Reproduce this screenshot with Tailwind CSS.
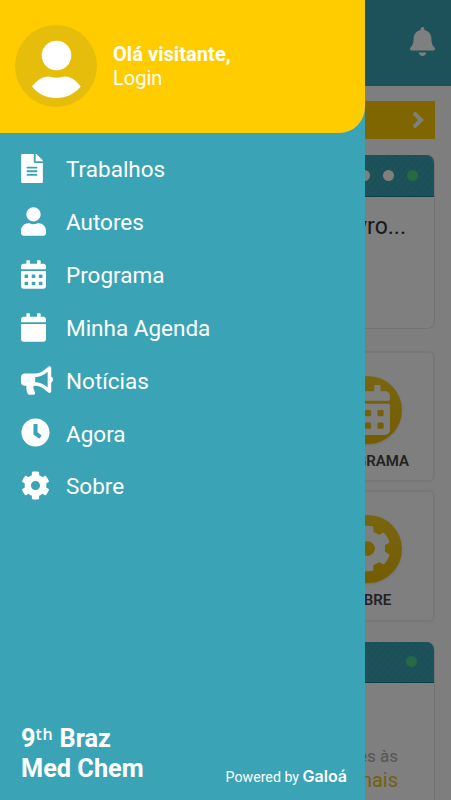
<!DOCTYPE html>
<html lang="pt-BR">

<head>
  <meta charset="UTF-8">
  <meta name="viewport" content="width=device-width, initial-scale=1.0">
  <script src="https://cdn.jsdelivr.net/npm/@tailwindcss/browser@4"></script>
  <title>9th Braz Med Chem</title>
</head>

<body class="flex h-screen flex-col overflow-hidden bg-[#fdfdfd] font-[Roboto,sans-serif]">
  <!-- Ícones compartilhados -->
  <svg class="hidden" aria-hidden="true">
    <symbol id="icon-calendar-alt" viewBox="0 0 448 512">
      <path fill-rule="evenodd" d="M12 192h424c6.6 0 12 5.4 12 12v260c0 26.5-21.5 48-48 48H48c-26.5 0-48-21.5-48-48V204c0-6.6 5.4-12 12-12zM76 256a12 12 0 0 0-12 12v40a12 12 0 0 0 12 12h40a12 12 0 0 0 12-12v-40a12 12 0 0 0-12-12zm128 0a12 12 0 0 0-12 12v40a12 12 0 0 0 12 12h40a12 12 0 0 0 12-12v-40a12 12 0 0 0-12-12zm128 0a12 12 0 0 0-12 12v40a12 12 0 0 0 12 12h40a12 12 0 0 0 12-12v-40a12 12 0 0 0-12-12zM76 384a12 12 0 0 0-12 12v40a12 12 0 0 0 12 12h40a12 12 0 0 0 12-12v-40a12 12 0 0 0-12-12zm128 0a12 12 0 0 0-12 12v40a12 12 0 0 0 12 12h40a12 12 0 0 0 12-12v-40a12 12 0 0 0-12-12zm128 0a12 12 0 0 0-12 12v40a12 12 0 0 0 12 12h40a12 12 0 0 0 12-12v-40a12 12 0 0 0-12-12z" />
      <path d="M448 148v-36c0-26.5-21.5-48-48-48h-48V12c0-6.6-5.4-12-12-12h-40c-6.6 0-12 5.4-12 12v52H160V12c0-6.6-5.4-12-12-12h-40c-6.6 0-12 5.4-12 12v52H48C21.5 64 0 85.5 0 112v36c0 6.6 5.4 12 12 12h424c6.6 0 12-5.4 12-12z" />
    </symbol>
    <symbol id="icon-cog" viewBox="0 0 512 512">
      <path d="M487.4 315.7l-42.6-24.6c4.3-23.2 4.3-47 0-70.2l42.6-24.6c4.9-2.8 7.1-8.6 5.5-14-11.1-35.6-30-67.8-54.7-94.6-3.8-4.1-10-5.1-14.8-2.3L380.8 110c-17.9-15.4-38.5-27.3-60.8-35.1V25.8c0-5.6-3.9-10.5-9.4-11.7-36.7-8.2-74.3-7.8-109.2 0-5.5 1.2-9.4 6.1-9.4 11.7V75c-22.2 7.9-42.8 19.8-60.8 35.1L88.7 85.5c-4.9-2.8-11-1.9-14.8 2.3-24.7 26.7-43.6 58.9-54.7 94.6-1.7 5.4.6 11.2 5.5 14L67.3 221c-4.3 23.2-4.3 47 0 70.2l-42.6 24.6c-4.9 2.8-7.1 8.6-5.5 14 11.1 35.6 30 67.8 54.7 94.6 3.8 4.1 10 5.1 14.8 2.3l42.6-24.6c17.9 15.4 38.5 27.3 60.8 35.1v49.2c0 5.6 3.9 10.5 9.4 11.7 36.7 8.2 74.3 7.8 109.2 0 5.5-1.2 9.4-6.1 9.4-11.7v-49.2c22.2-7.9 42.8-19.8 60.8-35.1l42.6 24.6c4.9 2.8 11 1.9 14.8-2.3 24.7-26.7 43.6-58.9 54.7-94.6 1.5-5.5-.7-11.3-5.6-14.1zM256 336c-44.1 0-80-35.9-80-80s35.9-80 80-80 80 35.9 80 80-35.9 80-80 80z" />
    </symbol>
  </svg>

  <!-- Página atrás do menu -->
  <header class="flex h-[86px] shrink-0 items-center justify-end bg-[#3aa4b6] pr-4 pb-[3px]">
    <svg class="h-[29px] w-[25px] text-white" viewBox="0 0 448 512" fill="currentColor" preserveAspectRatio="none">
      <path d="M224 512c35.32 0 63.97-28.65 63.97-64H160.03c0 35.35 28.65 64 63.97 64zm215.39-149.71c-19.32-20.76-55.47-51.99-55.47-154.29 0-77.7-54.48-139.9-127.94-155.16V32c0-17.67-14.32-32-31.98-32s-31.98 14.33-31.98 32v20.84C118.56 68.1 64.08 130.3 64.08 208c0 102.3-36.15 133.53-55.47 154.29-6 6.45-8.66 14.16-8.61 21.71.11 16.4 12.98 32 32.1 32h383.8c19.12 0 32-15.6 32.1-32 .05-7.55-2.61-15.27-8.61-21.71z" />
    </svg>
  </header>

  <main class="flex min-h-0 grow flex-col px-4 pt-[15px]">
    <a class="flex h-[38px] shrink-0 items-center justify-end bg-[#ffcc00] pr-[11px]">
      <svg class="h-[18px] w-3 text-white" viewBox="0 0 12 18" fill="none" stroke="currentColor" stroke-width="4">
        <path d="M1.8 1.8 9 9l-7.2 7.2" />
      </svg>
    </a>

    <section class="mt-4 h-[174px] shrink-0 overflow-hidden rounded-lg border border-t-0 border-[#e4e4e4] bg-white">
      <div class="flex h-[42px] items-center justify-end gap-[13px] border-b border-[#0f7f90] bg-[#3aa4b6] bg-[repeating-linear-gradient(130deg,#00000009_0_2px,transparent_2px_5px)] pr-4">
        <span class="size-[11px] rounded-full bg-white"></span>
        <span class="size-[11px] rounded-full bg-white"></span>
        <span class="size-[11px] rounded-full bg-[#4fd08a]"></span>
      </div>
      <p class="pt-[14px] pr-7 text-right text-[23px] leading-[32px] text-[#333]">livro...</p>
    </section>

    <div class="mt-[21.5px] grid shrink-0 grid-cols-3 gap-2 text-[15px] font-semibold text-[#444]">
      <div class="col-start-3 flex h-[131.5px] flex-col items-center rounded-md border-2 border-[#eeeeee] bg-white pt-[23px]">
        <span class="flex size-[68px] shrink-0 items-center justify-center rounded-full bg-linear-to-b from-[#f2cc20] to-[#e8b800] shadow-sm">
          <svg class="h-[50px] w-[44px] text-white" fill="currentColor"><use href="#icon-calendar-alt" /></svg>
        </span>
        <span class="mt-[7px] leading-5">PROGRAMA</span>
      </div>
      <div class="col-start-3 flex h-[131.5px] flex-col items-center rounded-md border-2 border-[#eeeeee] bg-white pt-[23px]">
        <span class="flex size-[68px] shrink-0 items-center justify-center rounded-full bg-linear-to-b from-[#f2cc20] to-[#e8b800] pb-0.5 shadow-sm">
          <svg class="size-[47px] text-white" fill="currentColor"><use href="#icon-cog" /></svg>
        </span>
        <span class="mt-[7px] leading-5">SOBRE</span>
      </div>
    </div>

    <section class="mt-5 min-h-0 grow overflow-hidden rounded-t-lg border-x border-[#e4e4e4] bg-white">
      <div class="flex h-[41px] items-center justify-end border-b border-[#0f7f90] bg-[#3aa4b6] bg-[repeating-linear-gradient(130deg,#00000009_0_2px,transparent_2px_5px)] pr-[17px]">
        <span class="size-[11px] rounded-full bg-[#4fd08a]"></span>
      </div>
      <div class="pt-[61px] pr-9 text-right">
        <p class="text-[17px] leading-6 text-[#aaa]">es às</p>
        <p class="text-[20px] leading-6 text-[#e8c020]">mais</p>
      </div>
    </section>
  </main>

  <div class="fixed inset-0 bg-black/50"></div>

  <!-- Menu lateral -->
  <aside class="fixed inset-y-0 left-0 flex w-[365px] flex-col bg-[#3aa4b6] text-white">
    <div class="flex h-[132.5px] shrink-0 items-center rounded-br-[26px] bg-[#ffcc00] pl-[15px]">
      <svg class="size-[82px]" viewBox="0 0 82 82">
        <circle cx="41" cy="41" r="41" fill="#e6bd0a" />
        <circle cx="41.5" cy="30.5" r="14.8" fill="#fff" />
        <path fill="#fff" d="M17 61.5C22 55 28 51.5 33 51.5c3 0 5 1.3 8.5 1.3S47 51.5 50 51.5C55.5 51.5 61 55 65.7 61.5 60 68.5 51.5 73 41.3 73S22.5 68.5 17 61.5z" />
      </svg>
      <div class="ml-4 text-[20px] leading-6">
        <p class="font-bold tracking-[0.06px]">Olá visitante,</p>
        <p>Login</p>
      </div>
    </div>

    <nav class="flex flex-col pt-[9.5px] pl-[21px] text-[22.5px]">
      <a class="flex h-[52.9px] items-center">
        <svg class="h-[29px] w-[22px]" viewBox="0 0 384 512" fill="currentColor">
          <path d="M224 136V0H24C10.7 0 0 10.7 0 24v464c0 13.3 10.7 24 24 24h336c13.3 0 24-10.7 24-24V160H248c-13.2 0-24-10.8-24-24zm64 236c0 6.6-5.4 12-12 12H108c-6.6 0-12-5.4-12-12v-8c0-6.6 5.4-12 12-12h168c6.6 0 12 5.4 12 12v8zm0-64c0 6.6-5.4 12-12 12H108c-6.6 0-12-5.4-12-12v-8c0-6.6 5.4-12 12-12h168c6.6 0 12 5.4 12 12v8zm0-72v8c0 6.6-5.4 12-12 12H108c-6.6 0-12-5.4-12-12v-8c0-6.6 5.4-12 12-12h168c6.6 0 12 5.4 12 12zm96-114.1v6.1H256V0h6.1c6.4 0 12.5 2.5 17 7l97.9 98c4.5 4.5 7 10.6 7 16.9z" />
        </svg>
        <span class="ml-[23px] pt-[3px]">Trabalhos</span>
      </a>
      <a class="flex h-[52.9px] items-center">
        <svg class="h-[29px] w-[25px]" viewBox="0 0 448 512" fill="currentColor">
          <path d="M224 256c70.7 0 128-57.3 128-128S294.7 0 224 0 96 57.3 96 128s57.3 128 128 128zm89.6 32h-16.7c-22.2 10.2-46.9 16-72.9 16s-50.6-5.8-72.9-16h-16.7C60.2 288 0 348.2 0 422.4V464c0 26.5 21.5 48 48 48h352c26.5 0 48-21.5 48-48v-41.6c0-74.2-60.2-134.4-134.4-134.4z" />
        </svg>
        <span class="ml-5 pt-[3px]">Autores</span>
      </a>
      <a class="flex h-[52.9px] items-center">
        <svg class="h-[29px] w-[25px]" fill="currentColor"><use href="#icon-calendar-alt" /></svg>
        <span class="ml-5 pt-[3px]">Programa</span>
      </a>
      <a class="flex h-[52.9px] items-center">
        <svg class="h-[29px] w-[25px]" viewBox="0 0 448 512" fill="currentColor">
          <path d="M12 192h424c6.6 0 12 5.4 12 12v260c0 26.5-21.5 48-48 48H48c-26.5 0-48-21.5-48-48V204c0-6.6 5.4-12 12-12zm436-44v-36c0-26.5-21.5-48-48-48h-48V12c0-6.6-5.4-12-12-12h-40c-6.6 0-12 5.4-12 12v52H160V12c0-6.6-5.4-12-12-12h-40c-6.6 0-12 5.4-12 12v52H48C21.5 64 0 85.5 0 112v36c0 6.6 5.4 12 12 12h424c6.6 0 12-5.4 12-12z" />
        </svg>
        <span class="ml-5 pt-[3px]">Minha Agenda</span>
      </a>
      <a class="flex h-[52.9px] items-center">
        <svg class="h-[29px] w-8" viewBox="0 0 576 512" fill="currentColor">
          <path d="M576 240c0-23.63-12.95-44.04-32-55.12V32.01C544 23.26 537.02 0 512 0c-7.12 0-14.19 2.38-19.98 7.02l-85.03 68.03C364.28 109.19 310.66 128 256 128H64c-35.35 0-64 28.65-64 64v96c0 35.35 28.65 64 64 64h33.7c-1.39 10.48-2.18 21.14-2.18 32 0 39.77 9.26 77.35 25.56 110.94 5.19 10.69 16.52 17.06 28.4 17.06h74.28c26.05 0 41.69-29.84 25.9-50.56-16.4-21.52-26.15-48.36-26.15-77.44 0-11.11 1.62-21.79 4.41-32H256c54.66 0 108.28 18.81 150.98 52.95l85.03 68.03a32.023 32.023 0 0 0 19.98 7.02c24.92 0 32-22.78 32-32V295.13C563.05 284.04 576 263.63 576 240zm-96 141.42l-33.05-26.44C392.95 311.78 325.12 288 256 288v-96c69.12 0 136.95-23.78 190.95-66.98L480 98.58v282.84z" />
        </svg>
        <span class="ml-[13px] pt-[3px]">Notícias</span>
      </a>
      <a class="flex h-[52.9px] items-center">
        <svg class="size-[29px]" viewBox="0 0 512 512" fill="currentColor">
          <path d="M256 8C119 8 8 119 8 256s111 248 248 248 248-111 248-248S393 8 256 8zm57.1 350.1L224.9 294c-3.1-2.3-4.9-5.9-4.9-9.7V116c0-6.6 5.4-12 12-12h48c6.6 0 12 5.4 12 12v137.7l63.5 46.2c5.4 3.9 6.5 11.4 2.6 16.8l-28.2 38.8c-3.9 5.3-11.4 6.5-16.8 2.6z" />
        </svg>
        <span class="ml-4 pt-[3px]">Agora</span>
      </a>
      <a class="flex h-[52.9px] items-center">
        <svg class="size-[29px]" fill="currentColor"><use href="#icon-cog" /></svg>
        <span class="ml-4 pt-[3px]">Sobre</span>
      </a>
    </nav>

    <footer class="mt-auto flex items-end justify-between pr-[18px] pb-[15px] pl-[21px]">
      <h1 class="pb-px text-[25.3px] leading-[30px] font-bold">9<span class="align-[7px] font-['Open_Sans',sans-serif] text-[16px] leading-none font-semibold tracking-[0.6px]">th</span> Braz<br>Med Chem</h1>
      <p class="text-[14.2px] leading-4">Powered by <b class="font-[Inter,sans-serif] text-[16px] font-semibold">Galoá</b></p>
    </footer>
  </aside>
</body>

</html>
